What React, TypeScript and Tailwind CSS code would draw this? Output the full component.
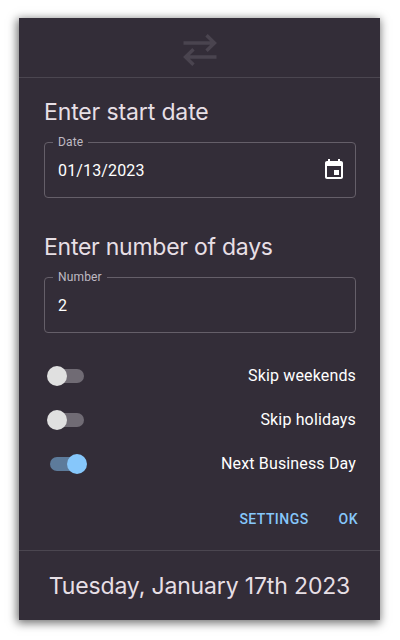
import React, { useState } from "react";

const heading = "font-['Inter','Noto_Sans',sans-serif] text-[23px] leading-8 text-[#e7dfe5] whitespace-nowrap";

function Field({ label, value, children }: { label: string; value: string; children?: React.ReactNode }) {
  return (
    <div className="relative flex h-14 w-[312px] items-center justify-between rounded-[4px] border border-[#655f69] pl-[13px] pr-[9px]">
      <span className="absolute -top-[9px] left-2 bg-[#332d38] px-[5px] text-[12px] leading-4 tracking-[0.15px] text-[#bfbac3]">
        {label}
      </span>
      <span className="pt-[2px] text-[16px] leading-6 tracking-[0.15px] text-white">{value}</span>
      {children}
    </div>
  );
}

function Toggle({ label, initial }: { label: string; initial: boolean }) {
  const [on, setOn] = useState(initial);
  return (
    <div className="flex h-11 items-center justify-between">
      <button
        role="switch"
        aria-checked={on}
        aria-label={label}
        onClick={() => setOn(!on)}
        className="relative ml-[6px] h-[14px] w-[34px]"
      >
        <span className={`block h-[14px] w-[34px] rounded-full ${on ? "bg-[#5d7b9b]" : "bg-[#706b74]"}`} />
        <span
          className={`absolute -top-[3px] size-5 rounded-full ${on ? "left-[17px] bg-[#86c7fb]" : "-left-[3px] bg-[#e0e0e0]"}`}
        />
      </button>
      <span className="text-[16px] leading-6 tracking-[0.15px] text-white">{label}</span>
    </div>
  );
}

export default function App() {
  return (
    <div className="h-[640px] w-[400px] overflow-hidden bg-white pl-[19px] pt-[18px] font-['Roboto','Liberation_Sans',sans-serif]">
      <main className="flex h-[602px] w-[361px] flex-col bg-[#332d38] shadow-[-1px_2px_9px_1px_rgba(0,0,0,0.57)]">
        <header className="flex h-[60px] items-center justify-center border-b border-[#4b4650]">
          <svg width="36" height="32" viewBox="0 0 36 32" fill="none" stroke="#4a444f" strokeWidth="3.4" className="mt-[5px]">
            <path d="M1.5 9H32.5M24.5 1.2L32.5 9L24.5 16.8" />
            <path d="M34.5 23H3.5M11.5 15.2L3.5 23L11.5 30.8" />
          </svg>
        </header>
        <section className="flex h-[472px] flex-col pl-[25px] pr-6">
          <h2 className={`${heading} mt-[18px] tracking-[-0.13px]`}>Enter start date</h2>
          <div className="mt-[14px]">
            <Field label="Date" value="01/13/2023">
              <svg width="24" height="24" viewBox="0 0 24 24" fill="white">
                <path d="M17 12h-5v5h5v-5zM16 1v2H8V1H6v2H5c-1.11 0-1.99.9-1.99 2L3 19c0 1.1.89 2 2 2h14c1.1 0 2-.9 2-2V5c0-1.1-.9-2-2-2h-1V1h-2zm3 18H5V8h14v11z" />
              </svg>
            </Field>
          </div>
          <h2 className={`${heading} mt-[33px] tracking-[-0.25px]`}>Enter number of days</h2>
          <div className="mt-[14px]">
            <Field label="Number" value="2" />
          </div>
          <div className="mt-[21px]">
            <Toggle label="Skip weekends" initial={false} />
            <Toggle label="Skip holidays" initial={false} />
            <Toggle label="Next Business Day" initial={true} />
          </div>
          <div className="-mr-[2px] mt-[21px] flex justify-end gap-[30px] text-[14px] font-medium leading-6 tracking-[0.45px] text-[#86c7fb]">
            <button>SETTINGS</button>
            <button>OK</button>
          </div>
        </section>
        <footer className="flex flex-1 items-center justify-center border-t border-[#4b4650]">
          <p className={`${heading} tracking-[-0.15px]`}>Tuesday, January 17th 2023</p>
        </footer>
      </main>
    </div>
  );
}
